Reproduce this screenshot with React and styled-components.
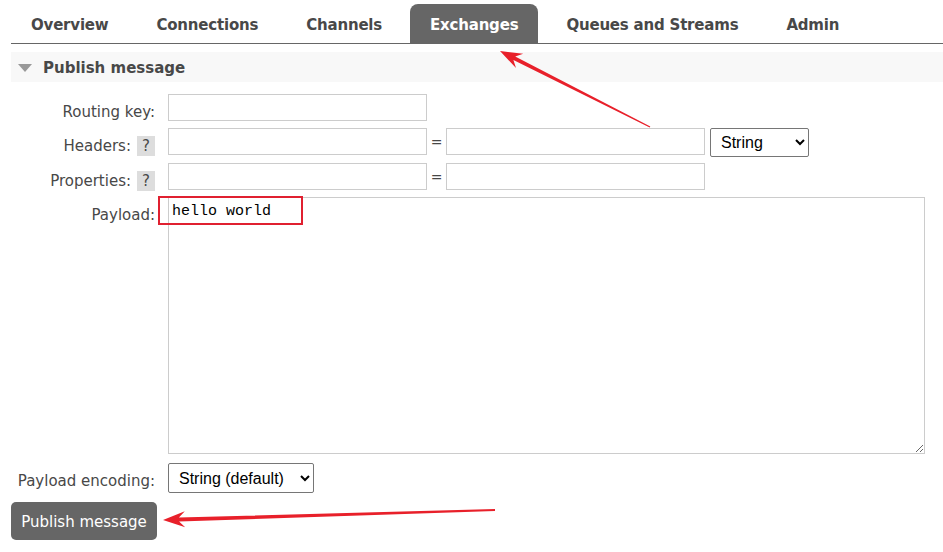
import styled, { createGlobalStyle } from "styled-components";

const GlobalStyle = createGlobalStyle`
  html, body {
    margin: 0;
    padding: 0;
    background: #fff;
  }
  body {
    font-family: "DejaVu Sans", Verdana, sans-serif;
    color: #484848;
  }
`;

const Page = styled.div`
  position: relative;
  width: 943px;
  height: 552px;
  box-sizing: border-box;
  padding: 4px 0 0 11px;
  overflow: hidden;
`;

const TabBar = styled.ul`
  display: flex;
  gap: 8px;
  margin: 0;
  padding: 0;
  list-style: none;
  border-bottom: 1px solid #666;
`;

const Tab = styled.li`
  height: 39px;
  line-height: 43px;
  padding: 0 20px;
  font-size: 15px;
  font-weight: bold;
  letter-spacing: -0.2px;
  border-radius: 8px 8px 0 0;
  background: ${(p) => (p.$active ? "#666" : "transparent")};
  color: ${(p) => (p.$active ? "#fff" : "#484848")};
  white-space: nowrap;
`;

const SectionHeader = styled.div`
  display: flex;
  align-items: center;
  gap: 11px;
  height: 30px;
  margin-top: 8px;
  padding: 2px 0 0 7px;
  box-sizing: border-box;
  background: #f8f8f8;
  font-size: 15px;
  font-weight: bold;
`;

const Triangle = styled.span`
  width: 0;
  height: 0;
  border-left: 7px solid transparent;
  border-right: 7px solid transparent;
  border-top: 8px solid #999;
`;

const Form = styled.div`
  display: flex;
  flex-direction: column;
  padding-top: 12px;
`;

const Row = styled.div`
  display: flex;
  align-items: flex-start;
  gap: 13px;
  margin-top: ${(p) => p.$top || 0}px;
`;

const Label = styled.div`
  box-sizing: border-box;
  width: 144px;
  height: 27px;
  display: flex;
  justify-content: flex-end;
  align-items: flex-start;
  gap: 6px;
  padding-top: 8px;
  font-size: 15px;
  line-height: 20px;
  white-space: nowrap;
`;

const Help = styled.span`
  width: 18px;
  height: 20px;
  background: #ddd;
  text-align: center;
  font-size: 15px;
  line-height: 20px;
  color: #484848;
`;

const Fields = styled.div`
  display: flex;
  align-items: flex-start;
`;

const TextInput = styled.input`
  box-sizing: border-box;
  width: 259px;
  height: 27px;
  border: 1px solid #ccc;
  padding: 0 3px;
  margin: 0;
  font-family: "DejaVu Sans", sans-serif;
  font-size: 14px;
  outline: none;
`;

const Equals = styled.span`
  width: 19px;
  height: 27px;
  text-align: center;
  font-size: 14px;
  line-height: 28px;
  color: #484848;
`;

const Select = styled.select`
  box-sizing: border-box;
  height: ${(p) => p.$h || 29}px;
  width: ${(p) => p.$w}px;
  margin: 0 0 0 ${(p) => p.$ml || 0}px;
  padding: 0 4px 0 6px;
  font-family: "Liberation Sans", Arial, sans-serif;
  font-size: 16px;
  color: #000;
  background: #fff;
  border: 1px solid #767676;
  border-radius: 2px;
`;

const Payload = styled.textarea`
  box-sizing: border-box;
  display: block;
  width: 757px;
  height: 257px;
  margin: 0;
  padding: 5px 3px 4px;
  border: 1px solid #ccc;
  font-family: "Liberation Mono", "DejaVu Sans Mono", monospace;
  font-size: 15px;
  color: #000;
  outline: none;
  resize: both;
`;

const PublishButton = styled.button`
  display: block;
  width: 146px;
  height: 38px;
  margin-top: 9px;
  padding: 2px 0 0;
  border: none;
  border-radius: 5px;
  background: #666;
  color: #fff;
  font-family: "DejaVu Sans", Verdana, sans-serif;
  font-size: 15px;
  cursor: pointer;
`;

const Annotations = styled.svg`
  position: absolute;
  left: 0;
  top: 0;
  pointer-events: none;
`;

const tabs = [
  "Overview",
  "Connections",
  "Channels",
  "Exchanges",
  "Queues and Streams",
  "Admin",
];

export default function App() {
  return (
    <Page>
      <GlobalStyle />
      <TabBar>
        {tabs.map((t) => (
          <Tab key={t} $active={t === "Exchanges"}>
            {t}
          </Tab>
        ))}
      </TabBar>
      <SectionHeader>
        <Triangle />
        Publish message
      </SectionHeader>
      <Form>
        <Row>
          <Label>Routing key:</Label>
          <TextInput />
        </Row>
        <Row $top={7}>
          <Label>
            Headers:<Help>?</Help>
          </Label>
          <Fields>
            <TextInput />
            <Equals>=</Equals>
            <TextInput />
            <Select $w={99} $ml={5} defaultValue="String">
              <option>String</option>
              <option>Number</option>
              <option>Boolean</option>
            </Select>
          </Fields>
        </Row>
        <Row $top={6}>
          <Label>
            Properties:<Help>?</Help>
          </Label>
          <Fields>
            <TextInput />
            <Equals>=</Equals>
            <TextInput />
          </Fields>
        </Row>
        <Row $top={7}>
          <Label>Payload:</Label>
          <Payload defaultValue="hello world" />
        </Row>
        <Row $top={9}>
          <Label>Payload encoding:</Label>
          <Select $w={146} $h={30} defaultValue="String (default)">
            <option>String (default)</option>
            <option>Base64</option>
          </Select>
        </Row>
        <div>
          <PublishButton>Publish message</PublishButton>
        </div>
      </Form>
      <Annotations width="943" height="552" viewBox="0 0 943 552">
        <polygon
          fill="#e8202a"
          points="650.3,126.5 515.2,56.4 523.2,53.8 500,51 516,68 513.4,60 649.7,127.5"
        />
        <rect
          x="159"
          y="197"
          width="143"
          height="27"
          fill="none"
          stroke="#e02030"
          strokeWidth="2"
        />
        <polygon
          fill="#e8202a"
          points="495,509 178.9,517.5 184.8,511.3 163,520 185.2,527.3 179.1,521.5 495,511"
        />
      </Annotations>
    </Page>
  );
}
